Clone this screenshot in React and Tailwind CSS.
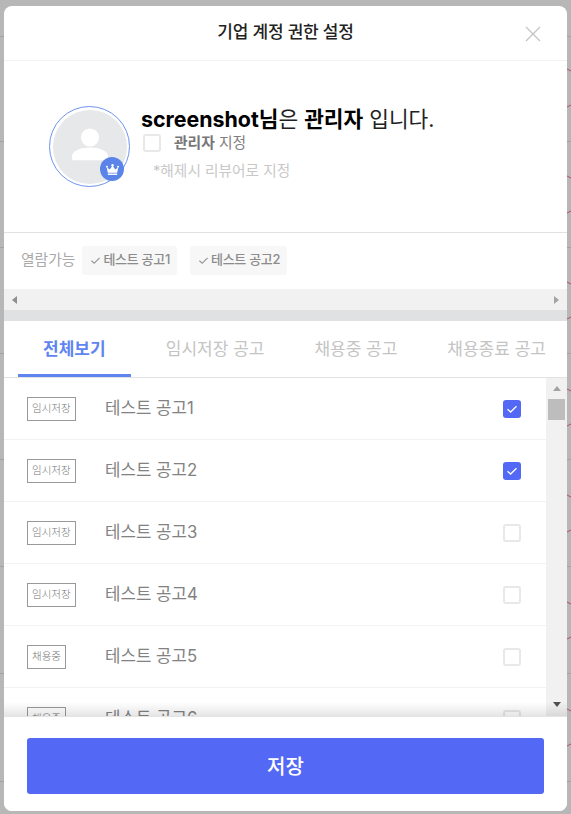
import React from "react";

const lines = [36, 141, 247, 353, 459, 566, 673, 781];
const ticksA = [70, 177, 283, 390, 496, 603, 710];
const ticksB = [106, 212, 318, 425, 531, 638, 745];

const rows = [
  { tag: "임시저장", title: "테스트 공고1", on: true },
  { tag: "임시저장", title: "테스트 공고2", on: true },
  { tag: "임시저장", title: "테스트 공고3", on: false },
  { tag: "임시저장", title: "테스트 공고4", on: false },
  { tag: "채용중", title: "테스트 공고5", on: false },
  { tag: "채용중", title: "테스트 공고6", on: false },
];

function Backdrop() {
  return (
    <svg className="absolute inset-0" width="571" height="814" viewBox="0 0 571 814">
      {lines.map((y) => (
        <rect key={y} x="0" y={y} width="571" height="1" fill="#a3a3a3" />
      ))}
      {ticksA.map((y) => (
        <path key={y} d={`M567 ${y - 1}L571 ${y + 1}`} stroke="#a8566a" strokeWidth="1" />
      ))}
      {ticksB.map((y) => (
        <path key={y} d={`M567 ${y + 1}L571 ${y - 1}`} stroke="#a8566a" strokeWidth="1" />
      ))}
    </svg>
  );
}

function Check({ className = "" }) {
  return (
    <svg viewBox="0 0 12 12" className={className} fill="none" stroke="currentColor" strokeWidth="1.3">
      <path d="M1.5 6.2L4.6 9L10.5 3.2" />
    </svg>
  );
}

function Box({ on }) {
  if (on) {
    return (
      <div className="flex h-[18px] w-[18px] items-center justify-center rounded-[3px] bg-[#5369f5] text-white">
        <Check className="h-3 w-3" />
      </div>
    );
  }
  return <div className="h-[18px] w-[18px] rounded-[3px] border-2 border-[#e8e8e8] bg-white" />;
}

function Chip({ children }) {
  return (
    <div className="flex h-[29px] items-center gap-[2px] rounded-[3px] bg-[#f7f7f7] pl-[8px] pr-[7px] text-[13px] font-medium tracking-[-0.3px] text-[#8c8c8c]">
      <Check className="h-[11px] w-[11px] text-[#999]" />
      <span>{children}</span>
    </div>
  );
}

export default function App() {
  return (
    <div
      className="relative h-[814px] w-[571px] overflow-hidden bg-[#b7b7b7] pl-[4px] pt-[6px]"
      style={{ fontFamily: 'Inter, "Noto Sans CJK KR", "Noto Sans", sans-serif' }}
    >
      <Backdrop />
      <div className="relative flex h-[805px] w-[563px] flex-col overflow-hidden rounded-[8px] bg-white">
        <header className="relative flex h-[55px] shrink-0 items-center justify-center border-b border-[#f2f2f2]">
          <h1 className="-mt-[1px] text-[17px] font-medium tracking-[-0.2px] text-[#222]">기업 계정 권한 설정</h1>
          <button className="absolute right-[26px] top-[20px] text-[#c4c4c4]">
            <svg width="16" height="16" viewBox="0 0 16 16" fill="none" stroke="currentColor" strokeWidth="1.3" className="block">
              <path d="M1 1L15 15M15 1L1 15" />
            </svg>
          </button>
        </header>

        <section className="flex h-[172px] shrink-0 border-b border-[#e2e2e2] pl-[45px] pt-[45px]">
          <div className="relative flex h-[81px] w-[81px] shrink-0 items-center justify-center rounded-full border border-[#6f93f0] bg-white">
            <div className="flex h-[74px] w-[74px] items-center justify-center rounded-full bg-[#e7e8ea]">
              <svg width="38" height="38" viewBox="0 0 40 40" fill="#fff">
                <circle cx="20" cy="10" r="9.500" />
                <path d="M1 30c0-6 9-9.500 19-9.500S39 24 39 30v2.500c0 1-1 1.500-2 1.500H3c-1 0-2-.5-2-1.500z" />
              </svg>
            </div>
            <div className="absolute bottom-[5px] right-[5px] flex h-[24px] w-[24px] items-center justify-center rounded-full bg-[#5b84e8]">
              <svg width="13" height="11" viewBox="0 0 13 11" fill="#fff">
                <circle cx="6.500" cy="1.200" r="1.200" />
                <circle cx="1" cy="2.800" r="1" />
                <circle cx="12" cy="2.800" r="1" />
                <path d="M.8 3.500L3.800 5.500L6.500 1.500L9.200 5.500L12.200 3.500L11.200 8.800H1.800z" />
                <rect x="1.800" y="9.400" width="9.400" height="1.600" rx=".4" />
              </svg>
            </div>
          </div>
          <div className="ml-[11px] flex flex-col">
            <p className="-mt-[1px] h-[28px] whitespace-nowrap text-[21.4px] leading-[28px] text-[#222]">
              <b className="font-bold text-black">screenshot님</b>은 <b className="font-bold text-black">관리자</b> 입니다.
            </p>
            <div className="ml-[2px] mt-[1px] flex h-[18px] items-center">
              <div className="h-[18px] w-[18px] rounded-[3px] border-2 border-[#e8e8e8]" />
              <span className="ml-[13px] mt-[1px] text-[14.8px] text-[#808080]">
                <b className="font-bold text-[#777]">관리자</b> 지정
              </span>
            </div>
            <p className="ml-[12px] mt-[9px] text-[14.7px] leading-[20px] text-[#c8c8c8]">*해제시 리뷰어로 지정</p>
          </div>
        </section>

        <section className="flex h-[56px] shrink-0 items-center pl-[17px]">
          <span className="mr-[7px] -mt-[2px] text-[14.8px] text-[#aaa]">열람가능</span>
          <div className="-mt-[2px] flex gap-[13px]">
            <Chip>테스트 공고1</Chip>
            <Chip>테스트 공고2</Chip>
          </div>
        </section>

        <div className="flex h-[21px] shrink-0 items-center justify-between bg-[#f1f1f1] px-[8px]">
          <span className="h-0 w-0 border-y-[4px] border-r-[5px] border-y-transparent border-r-[#8f8f8f]" />
          <span className="h-0 w-0 border-y-[4px] border-l-[5px] border-y-transparent border-l-[#a3a3a3]" />
        </div>
        <div className="h-[11px] shrink-0 bg-[#e0e1e3]" />

        <nav className="grid h-[57px] shrink-0 grid-cols-4 border-b border-[#e2e2e2]">
          {["전체보기", "임시저장 공고", "채용중 공고", "채용종료 공고"].map((t, i) => (
            <div
              key={t}
              className={
                i === 0
                  ? "mx-[14px] flex h-[56px] items-center justify-center whitespace-nowrap border-b-[3px] border-[#5f85f0] pt-[5px] text-[17px] font-bold text-[#5f85f0]"
                  : "flex h-[56px] items-center justify-center whitespace-nowrap pt-[2px] text-[17px] text-[#c4c4c4]"
              }
            >
              {t}
            </div>
          ))}
        </nav>

        <div className="relative flex min-h-0 flex-1">
          <ul className="min-w-0 flex-1 overflow-hidden">
            {rows.map((r) => (
              <li key={r.title} className="flex h-[62px] shrink-0 items-center border-b border-[#f2f2f2] pl-[23px]">
                <div className="flex w-[78px]">
                  <span className="flex h-[24px] items-center border border-[#999] px-[4px] text-[10.5px] font-light text-[#777]">
                    {r.tag}
                  </span>
                </div>
                <span className="mt-[1px] text-[16.8px] text-[#828282]">{r.title}</span>
                <div className="ml-auto mr-[25px]">
                  <Box on={r.on} />
                </div>
              </li>
            ))}
          </ul>
          <div className="flex w-[21px] shrink-0 flex-col items-center bg-[#f1f1f1]">
            <span className="mt-[8px] h-0 w-0 border-x-[4px] border-b-[5px] border-x-transparent border-b-[#a3a3a3]" />
            <div className="mt-[8px] h-[21px] w-[17px] bg-[#bdbdbd]" />
            <span className="mb-[9px] mt-auto h-0 w-0 border-x-[4px] border-t-[5px] border-x-transparent border-t-[#505050]" />
          </div>
          <div className="pointer-events-none absolute bottom-0 left-0 right-0 h-[14px] bg-gradient-to-b from-transparent to-black/10" />
        </div>

        <footer className="flex h-[95px] shrink-0 border-t border-[#e4e4e4] bg-white px-[23px] pt-[21px]">
          <button className="h-[56px] w-full rounded-[3px] bg-[#5369f5] pt-[2px] text-[20px] font-medium text-white">저장</button>
        </footer>
      </div>
    </div>
  );
}
